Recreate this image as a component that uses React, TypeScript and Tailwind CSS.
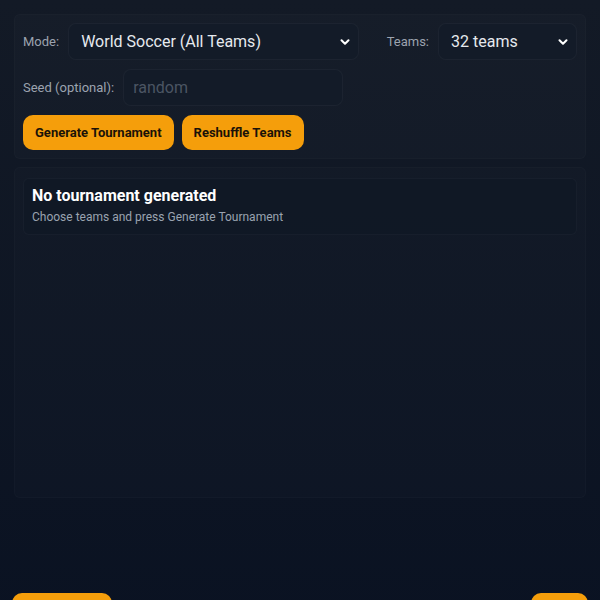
import { ChevronDown } from 'lucide-react';

const font = { fontFamily: 'Roboto, "Noto Sans", sans-serif' };

function Select({ value, className }: { value: string; className?: string }) {
  return (
    <div className={`relative h-[37px] ${className ?? ''}`}>
      <select
        defaultValue={value}
        className="w-full h-full appearance-none rounded-lg border border-white/[0.04] bg-[#131b28] pl-3 pr-8 text-[16px] text-[#e6e9ee] outline-none"
      >
        <option>{value}</option>
      </select>
      <ChevronDown
        size={14}
        strokeWidth={3.5}
        className="pointer-events-none absolute right-[7px] top-[12px] text-white"
      />
    </div>
  );
}

export default function App() {
  return (
    <div
      className="min-h-screen bg-gradient-to-b from-[#131a26] to-[#0a1222] text-white"
      style={font}
    >
      <div className="px-[14px] pt-[14px]">
        <section className="rounded-md border border-white/[0.02] bg-white/[0.015] px-2 pt-[8px] pb-[8px] flex flex-col gap-[9px]">
          <div className="flex items-center">
            <span className="text-[13px] text-[#9ca3af] mr-[9px]">Mode:</span>
            <Select value="World Soccer (All Teams)" className="flex-1" />
            <span className="text-[13px] text-[#9ca3af] ml-[28px] mr-[9px]">Teams:</span>
            <Select value="32 teams" className="w-[139px]" />
          </div>
          <div className="flex items-center">
            <span className="text-[13px] text-[#9ca3af] mr-[9px]">Seed (optional):</span>
            <input
              placeholder="random"
              className="h-[37px] w-[220px] rounded-lg border border-white/[0.04] bg-[#131b28] px-[9px] text-[16px] text-[#e6e9ee] placeholder:text-[#4b5563] outline-none"
            />
          </div>
          <div className="flex gap-2">
            <button className="h-[35px] px-3 rounded-[10px] bg-[#f59e0b] text-[13px] font-bold text-[#1a1208]">
              Generate Tournament
            </button>
            <button className="h-[35px] px-3 rounded-[10px] bg-[#f59e0b] text-[13px] font-bold text-[#1a1208]">
              Reshuffle Teams
            </button>
          </div>
        </section>

        <section className="mt-2 h-[331px] rounded-md border border-white/[0.02] bg-white/[0.012] px-2 pt-[10px]">
          <div className="rounded-md border border-white/[0.03] bg-[#0f1724]/60 px-[8px] pt-[6px] pb-[8px]">
            <h2 className="text-[16px] font-bold leading-[22px] text-white">No tournament generated</h2>
            <p className="mt-[1px] text-[12px] text-[#9aa3b0]">Choose teams and press Generate Tournament</p>
          </div>
        </section>
      </div>

      <div className="mt-[95px] flex justify-between px-3">
        <button className="h-[44px] w-[100px] rounded-[10px] bg-[#f59e0b] text-[13px] font-bold text-[#1a1208]">
          Back
        </button>
        <button className="h-[44px] w-[57px] rounded-[10px] bg-[#f59e0b] text-[13px] font-bold text-[#1a1208]">
          Next
        </button>
      </div>
    </div>
  );
}
